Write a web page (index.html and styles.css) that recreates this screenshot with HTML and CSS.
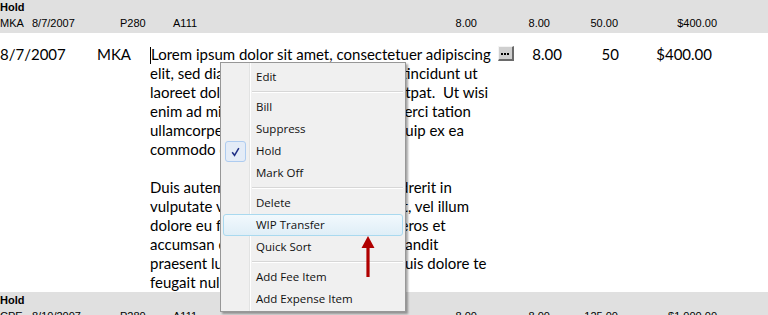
FILE: index.html
```html
<!DOCTYPE html>
<html>
<head>
<meta charset="utf-8">
<link rel="stylesheet" href="styles.css">
</head>
<body>
<div class="band">
  <div class="band-title">Hold</div>
  <div class="band-row">
    <span>MKA</span><span>8/7/2007</span><span>P280</span><span>A111</span>
    <span class="num">8.00</span><span class="num">8.00</span><span class="num">50.00</span><span class="num">$400.00</span>
  </div>
</div>
<div class="entry">
  <div class="e-date">8/7/2007</div>
  <div class="e-init">MKA</div>
  <div class="e-text"><span class="caret"></span>Lorem ipsum dolor sit amet, consectetuer adipiscing<br>elit, sed diam nonummy nibh euismod tincidunt ut<br>laoreet dolore magna aliquam erat volutpat.&nbsp; Ut wisi<br>enim ad minim veniam, quis nostrud exerci tation<br>ullamcorper suscipit lobortis nisl ut aliquip ex ea<br>commodo consequat.<br><br>Duis autem vel eum iriure dolor in hendrerit in<br>vulputate velit esse molestie consequat, vel illum<br>dolore eu feugiat nulla facilisis at vero eros et<br>accumsan et iusto odio dignissim qui blandit<br>praesent luptatum zzril delenit augue duis dolore te<br>feugait nulla facilisi.</div>
  <div class="e-btn-cell"><span class="e-btn"><svg width="12" height="11" viewBox="0 0 12 11"><rect x="2" y="6" width="2" height="2" fill="#000"/><rect x="5" y="6" width="2" height="2" fill="#000"/><rect x="8" y="6" width="2" height="2" fill="#000"/></svg></span></div>
  <div class="e-num e-n1">8.00</div>
  <div class="e-num e-n2">50</div>
  <div class="e-num e-n3">$400.00</div>
</div>
<div class="band band-bottom">
  <div class="band-title">Hold</div>
  <div class="band-row">
    <span>CPE</span><span>8/10/2007</span><span>P280</span><span>A111</span>
    <span class="num">8.00</span><span class="num">8.00</span><span class="num">125.00</span><span class="num">$1,000.00</span>
  </div>
</div>

<div class="menu">
  <div class="menu-item">Edit</div>
  <div class="menu-sep"></div>
  <div class="menu-item">Bill</div>
  <div class="menu-item">Suppress</div>
  <div class="menu-item checked">
    <span class="check"><svg width="20" height="20" viewBox="0 0 20 20"><path d="M6.5 10.2 L9 13.5 L13.5 6" fill="none" stroke="#1f2f86" stroke-width="1.6"/></svg></span>Hold</div>
  <div class="menu-item">Mark Off</div>
  <div class="menu-sep"></div>
  <div class="menu-item">Delete</div>
  <div class="menu-item hot">WIP Transfer</div>
  <div class="menu-item">Quick Sort</div>
  <div class="menu-sep"></div>
  <div class="menu-item">Add Fee Item</div>
  <div class="menu-item">Add Expense Item</div>
</div>

<svg class="arrow" width="16" height="42" viewBox="0 0 16 42"><path d="M8 0 L14.5 12 L9.6 12 L9.6 41 L6.4 41 L6.4 12 L1.5 12 Z" fill="#b00000"/></svg>
</body>
</html>
```

FILE: styles.css
```css
html, body {
  margin: 0;
  padding: 0;
  background: #ffffff;
  overflow: hidden;
}
body {
  width: 768px;
  height: 315px;
  position: relative;
  font-family: "Liberation Sans", Arial, sans-serif;
  color: #000;
}
.band {
  background: #e0e0e0;
  height: 33px;
  font-size: 11px;
  line-height: 16px;
  box-sizing: border-box;
}
.band-title {
  font-weight: bold;
  height: 14px;
  line-height: 14px;
}
.band-row {
  display: grid;
  grid-template-columns: 32px 88px 53px 247px 57px 73px 68px 99px;
  height: 16px;
  line-height: 16px;
  padding-top: 1px;
}
.band-row .num {
  text-align: right;
}
.band-bottom {
  height: 23px;
  padding-top: 1px;
}
.entry {
  display: flex;
  align-items: flex-start;
  height: 259px;
  box-sizing: border-box;
  padding-top: 12px;
  font-family: "Lato", "Open Sans", sans-serif;
  font-size: 15px;
  line-height: 19px;
  color: #000;
}
.e-date {
  width: 97px;
  flex: none;
}
.e-init {
  width: 53px;
  flex: none;
}
.e-text {
  width: 348px;
  flex: none;
  white-space: nowrap;
}
.caret {
  display: inline-block;
  width: 1px;
  height: 17px;
  background: #000;
  vertical-align: -4px;
}
.e-btn-cell {
  width: 17px;
  flex: none;
  padding-top: 1px;
}
.e-btn {
  display: block;
  width: 16px;
  height: 15px;
  box-sizing: border-box;
  background: #cfcfcf;
  border-top: 1px solid #f4f4f4;
  border-left: 1px solid #f4f4f4;
  border-right: 2px solid #6a6a6a;
  border-bottom: 2px solid #6a6a6a;
  line-height: 0;
}
.e-btn svg {
  display: block;
}
.e-num {
  flex: none;
  text-align: right;
}
.e-n1 { width: 47px; }
.e-n2 { width: 57px; }
.e-n3 { width: 93px; }

/* context menu */
.menu {
  position: absolute;
  left: 220px;
  top: 62px;
  width: 186px;
  height: 250px;
  box-sizing: border-box;
  background: #f0f0f0;
  border: 1px solid #979797;
  box-shadow: 2px 2px 2px rgba(0,0,0,0.35);
  padding: 3px 2px 2px 2px;
  font-family: "Open Sans", "Noto Sans", sans-serif;
  font-size: 11.5px;
  color: #111;
  background-image: linear-gradient(to right, transparent 28px, #e2e3e3 28px, #e2e3e3 29px, #ffffff 29px, #ffffff 30px, transparent 30px);
}
.menu-item {
  position: relative;
  height: 22px;
  line-height: 20px;
  padding-left: 32px;
  box-sizing: border-box;
  border: 1px solid transparent;
  border-radius: 3px;
  white-space: nowrap;
}
.menu-item.hot {
  border-color: #a9d9ef;
  background: linear-gradient(to bottom, #f2f9fd, #dfeef7);
}
.menu-sep {
  height: 8px;
  margin-left: 29px;
  background: linear-gradient(to bottom, transparent 3px, #d7d7d7 3px, #d7d7d7 4px, #ffffff 4px, #ffffff 5px, transparent 5px);
}
.check {
  position: absolute;
  left: 1px;
  top: 0px;
  width: 21px;
  height: 21px;
  box-sizing: border-box;
  border: 1px solid #aeccf0;
  border-radius: 3px;
  background: #e4ecf7;
  display: flex;
  align-items: center;
  justify-content: center;
}
.arrow {
  position: absolute;
  left: 360px;
  top: 236px;
}
```
